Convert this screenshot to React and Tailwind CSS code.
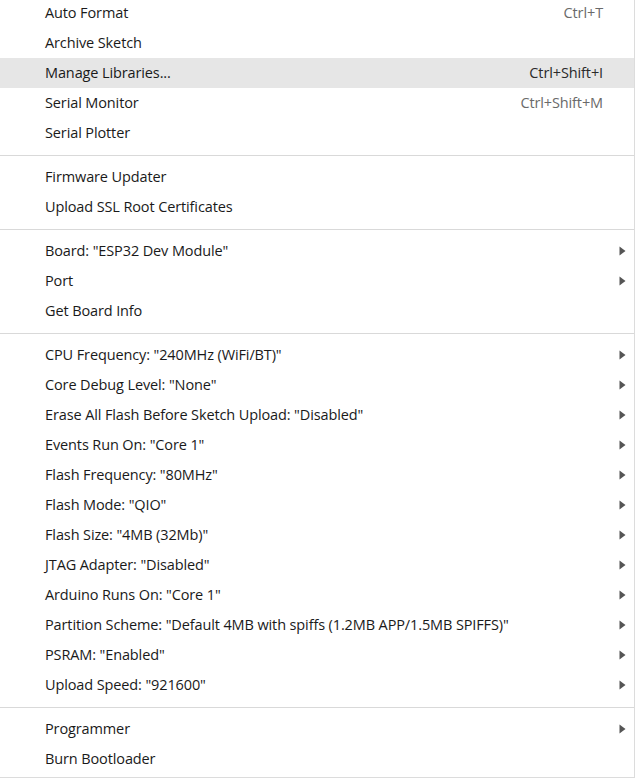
import React from "react";

const groups = [
  [
    { label: "Auto Format", shortcut: "Ctrl+T" },
    { label: "Archive Sketch" },
    { label: "Manage Libraries...", shortcut: "Ctrl+Shift+I", active: true },
    { label: "Serial Monitor", shortcut: "Ctrl+Shift+M" },
    { label: "Serial Plotter" },
  ],
  [{ label: "Firmware Updater" }, { label: "Upload SSL Root Certificates" }],
  [
    { label: 'Board: "ESP32 Dev Module"', sub: true },
    { label: "Port", sub: true },
    { label: "Get Board Info" },
  ],
  [
    { label: 'CPU Frequency: "240MHz (WiFi/BT)"', sub: true },
    { label: 'Core Debug Level: "None"', sub: true },
    { label: 'Erase All Flash Before Sketch Upload: "Disabled"', sub: true },
    { label: 'Events Run On: "Core 1"', sub: true },
    { label: 'Flash Frequency: "80MHz"', sub: true },
    { label: 'Flash Mode: "QIO"', sub: true },
    { label: 'Flash Size: "4MB (32Mb)"', sub: true },
    { label: 'JTAG Adapter: "Disabled"', sub: true },
    { label: 'Arduino Runs On: "Core 1"', sub: true },
    { label: 'Partition Scheme: "Default 4MB with spiffs (1.2MB APP/1.5MB SPIFFS)"', sub: true },
    { label: 'PSRAM: "Enabled"', sub: true },
    { label: 'Upload Speed: "921600"', sub: true },
  ],
  [{ label: "Programmer", sub: true }, { label: "Burn Bootloader" }],
];

function Arrow() {
  return (
    <svg width="7" height="10" viewBox="0 0 7 10" className="block">
      <path d="M0.5 0.5 L6.5 5 L0.5 9.5 Z" fill="#555555" />
    </svg>
  );
}

function Item({ item }) {
  return (
    <div
      className={`flex h-[30px] items-center pl-[45px] pr-[8px] text-[14.5px] tracking-[-0.12px] text-[#1a1a1a] ${
        item.active ? "bg-[#e6e6e6]" : ""
      }`}
    >
      <span className="flex-1 whitespace-nowrap">{item.label}</span>
      {item.shortcut && (
        <span className={`mr-[23px] whitespace-nowrap ${item.active ? "text-[#2a2a2a]" : "text-[#6a6a6a]"}`}>
          {item.shortcut}
        </span>
      )}
      {item.sub && (
        <span className="flex w-[10px] justify-end">
          <Arrow />
        </span>
      )}
    </div>
  );
}

export default function App() {
  return (
    <div
      className="h-[779px] w-[638px] overflow-hidden bg-white"
      style={{ fontFamily: '"Open Sans", "Noto Sans", sans-serif' }}
    >
      <div className="-mt-[2px] h-[780px] w-[635px] border-r border-b border-[#dcdcdc] bg-white">
        {groups.map((g, gi) => (
          <div key={gi}>
            {gi > 0 && (
              <div className="flex h-[14px] items-center">
                <div className="h-px w-full bg-[#d9d9d9]" />
              </div>
            )}
            {g.map((item, ii) => (
              <Item key={ii} item={item} />
            ))}
          </div>
        ))}
      </div>
    </div>
  );
}
